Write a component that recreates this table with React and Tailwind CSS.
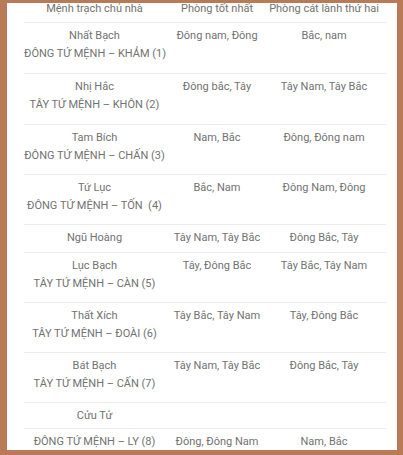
import React from "react";

const rows = [
  { name: ["Nhất Bạch", "ĐÔNG TỨ MỆNH – KHẢM (1)"], best: "Đông nam, Đông", second: "Bắc, nam", pb: "pb-[10px]" },
  { name: ["Nhị Hắc", "TÂY TỨ MỆNH – KHÔN (2)"], best: "Đông bắc, Tây", second: "Tây Nam, Tây Bắc", pb: "pb-[10px]" },
  { name: ["Tam Bích", "ĐÔNG TỨ MỆNH – CHẤN (3)"], best: "Nam, Bắc", second: "Đông, Đông nam", pb: "pb-[9px]" },
  { name: ["Tứ Lục", "ĐÔNG TỨ MỆNH – TỐN\u00a0 (4)"], best: "Bắc, Nam", second: "Đông Nam, Đông", pb: "pb-[9px]" },
  { name: ["Ngũ Hoàng"], best: "Tây Nam, Tây Bắc", second: "Đông Bắc, Tây", pb: "pb-[5px]" },
  { name: ["Lục Bạch", "TÂY TỨ MỆNH – CÀN (5)"], best: "Tây, Đông Bắc", second: "Tây Bắc, Tây Nam", pb: "pb-[9px]" },
  { name: ["Thất Xích", "TÂY TỨ MỆNH – ĐOÀI (6)"], best: "Tây Bắc, Tây Nam", second: "Tây, Đông Bắc", pb: "pb-[9px]" },
  { name: ["Bát Bạch", "TÂY TỨ MỆNH – CẤN (7)"], best: "Tây Nam, Tây Bắc", second: "Đông Bắc, Tây", pb: "pb-[9px]" },
  { name: ["Cửu Tử"], best: "", second: "", pb: "pb-[3px]" },
  { name: ["ĐÔNG TỨ MỆNH – LY (8)"], best: "Đông, Đông Nam", second: "Nam, Bắc", pb: "pb-[4px]" },
];

const App = () => {
  return (
    <div className="w-[403px] h-[455px] bg-[#b97b57] pt-[3px] pl-[7px] pr-[6px] pb-[5px]">
      <div
        className="h-full bg-white overflow-hidden pl-[17px] pr-[11px] text-[11px] leading-[18px] text-[#727272] whitespace-nowrap"
        style={{ fontFamily: "Roboto, 'Noto Sans', sans-serif" }}
      >
        <div className="-mt-[3px]">
          {/* header */}
          <div className="grid grid-cols-[141px_104px_110px] text-center h-[22px]">
            <div>Mệnh trạch chủ nhà</div>
            <div>Phòng tốt nhất</div>
            <div>Phòng cát lành thứ hai</div>
          </div>

          {rows.map((row, i) => (
            <div
              key={i}
              className={
                "grid grid-cols-[141px_104px_110px] text-center border-t border-[#ececec] pt-[4px] " + row.pb
              }
            >
              <div>
                {row.name.map((line, j) => (
                  <div key={j}>{line}</div>
                ))}
              </div>
              <div>{row.best}</div>
              <div>{row.second}</div>
            </div>
          ))}
        </div>
      </div>
    </div>
  );
};

export default App;
